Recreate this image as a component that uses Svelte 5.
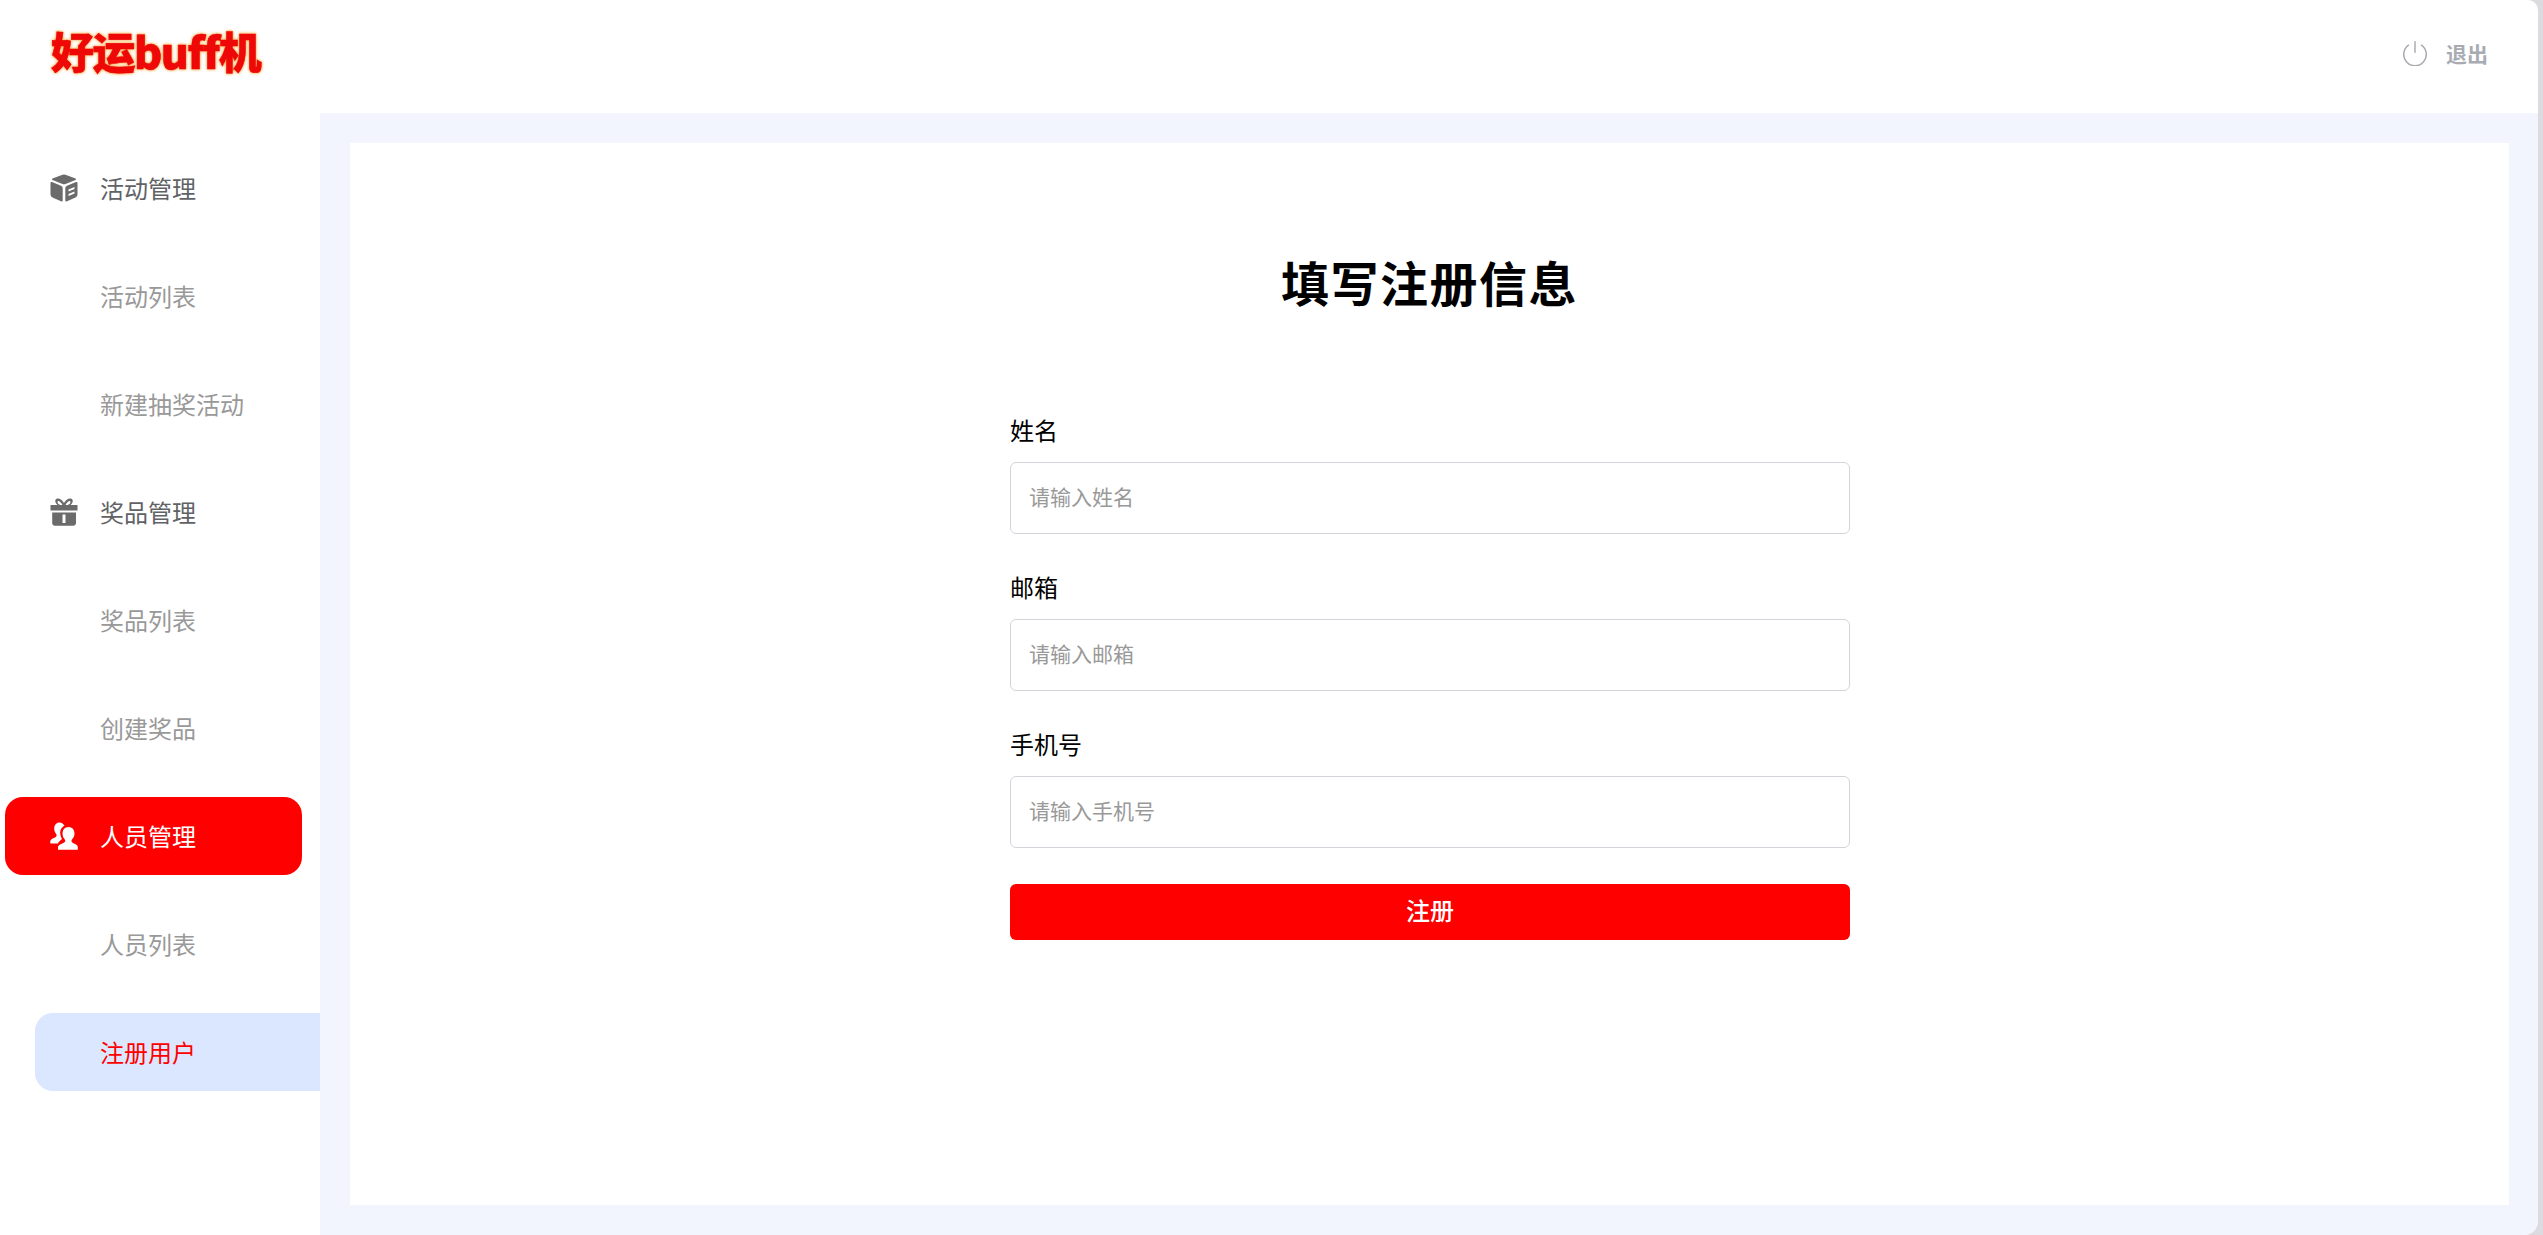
<script>
  const menu = [
    { label: '活动管理', icon: 'cube', kind: 'parent' },
    { label: '活动列表', kind: 'child' },
    { label: '新建抽奖活动', kind: 'child' },
    { label: '奖品管理', icon: 'gift', kind: 'parent' },
    { label: '奖品列表', kind: 'child' },
    { label: '创建奖品', kind: 'child' },
    { label: '人员管理', icon: 'users', kind: 'parent active' },
    { label: '人员列表', kind: 'child' },
    { label: '注册用户', kind: 'child current' }
  ];
  const fields = [
    { label: '姓名', ph: '请输入姓名' },
    { label: '邮箱', ph: '请输入邮箱' },
    { label: '手机号', ph: '请输入手机号' }
  ];
</script>

<div class="page">
  <header class="top">
    <div class="logo">好运buff机</div>
    <div class="logout">
      <svg class="power" viewBox="0 0 24 25" fill="none" stroke="currentColor" stroke-width="1.5" stroke-linecap="round">
        <path d="M5.500 4.200a11.300 11.300 0 1 0 13 0" />
        <path d="M12 0.800v10.400" />
      </svg>
      <span>退出</span>
    </div>
  </header>
  <div class="body">
    <nav class="side">
      {#each menu as m}
        <div class="item {m.kind}">
          {#if m.icon === 'cube'}
            <svg class="ic" viewBox="0 0 28 28" fill="currentColor">
              <path d="M12.500 0.800Q14 0.300 15.500 0.800L25.500 4.500Q27 5.200 25.500 6L15.500 10Q14 10.600 12.500 10L2.500 6Q1 5.200 2.500 4.500Z" />
              <path d="M0.500 9Q0.500 7.500 2 8L11 11.800Q12.700 12.500 12.700 14V26.500Q12.700 28 11 27.300L2.500 23.500Q0.500 22.700 0.500 20.500Z" />
              <path fill-rule="evenodd" d="M27.500 9Q27.500 7.500 26 8L17 11.800Q15.300 12.500 15.300 14V26.500Q15.300 28 17 27.300L25.500 23.500Q27.500 22.700 27.500 20.500ZM18.500 15.500 24.500 13V15L18.500 17.500ZM18.500 20 24.500 17.500V19.500L18.500 22Z" />
            </svg>
          {:else if m.icon === 'gift'}
            <svg class="ic" viewBox="0 0 28 28" fill="currentColor">
              <path fill-rule="evenodd" d="M0.500 7H27.500V12.500H0.500ZM7.500 7C4.500 5 4.500 0.800 7.500 0.500 10 0.300 12.500 2.500 14 5 15.500 2.500 18 0.300 20.500 0.500 23.500 0.800 23.500 5 20.500 7H17.500C19.800 6 20.800 5 20.300 3.400 19.800 2.200 17.200 3.500 15.500 7H12.500C10.800 3.500 8.200 2.200 7.700 3.400 7.200 5 8.200 6 10.500 7Z" />
              <path fill-rule="evenodd" d="M2.200 14.500H26V24.500Q26 27.800 23 27.800H5Q2.200 27.800 2.200 24.500ZM12.500 16.500V25H15.500V16.500Z" />
            </svg>
          {:else if m.icon === 'users'}
            <svg class="ic" viewBox="0 0 28 28" fill="currentColor">
              <path d="M9.500 0.500C6.500 0.500 4.200 3 4.200 6.500 4.200 9 5.200 10.800 6.200 12 7 13.200 6.800 14.400 5 15.500 3 16.500 0.500 17 0.300 19.500V21.500H8C8.600 19.500 11 18 12 17 11 15 10 12.500 10.200 10 10.400 7 12 5 14.500 3.800 13.500 1.800 11.700 0.500 9.500 0.500Z" />
              <path d="M18.500 5C15 5 12.500 7.800 12.500 11.500 12.500 14 13.600 16 14.800 17.500 15.700 19 15.200 20 13.500 21 11.500 22 8.500 22.500 8 25V27.700H27.800V25C27.500 22.500 25 22 23 21 21.500 20 21 19 22 17.500 23.300 16 24.500 14 24.500 11.500 24.500 7.800 22 5 18.500 5Z" />
            </svg>
          {/if}
          <span>{m.label}</span>
        </div>
      {/each}
    </nav>
    <main class="main">
      <section class="card">
        <h1>填写注册信息</h1>
        <form class="form">
          {#each fields as f}
            <label class="field">
              <span>{f.label}</span>
              <input placeholder={f.ph} />
            </label>
          {/each}
          <button type="button">注册</button>
        </form>
      </section>
    </main>
  </div>
</div>

<style>
  :global(html), :global(body) {
    margin: 0;
    background: #dcdce0;
  }
  .page {
    width: 2538px;
    height: 1235px;
    display: flex;
    flex-direction: column;
    background: #fff;
    border-radius: 0 10px 14px 0;
    overflow: hidden;
    font-family: "Noto Sans CJK SC", "Noto Sans", sans-serif;
  }
  .top {
    height: 113px;
    flex: none;
    display: flex;
    align-items: center;
    justify-content: space-between;
    padding: 0 50px 0 51px;
    box-sizing: border-box;
  }
  .logo {
    font-size: 43px;
    line-height: 1;
    font-weight: 900;
    letter-spacing: -1.5px;
    padding-bottom: 12px;
    color: #ee0808;
    -webkit-text-stroke: 0.5px #ee0808;
    filter: drop-shadow(0 0 1px #f7a94a) drop-shadow(0 0 1.5px #f9c98a);
  }
  .logout {
    display: flex;
    align-items: center;
    gap: 19px;
    color: #a9abb3;
    font-size: 21px;
    font-weight: 700;
    padding-bottom: 7px;
  }
  .power {
    width: 24px;
    height: 25px;
    color: #a9abb3;
  }
  .body {
    flex: 1;
    display: flex;
    min-height: 0;
  }
  .side {
    width: 320px;
    flex: none;
    padding-top: 36px;
    display: flex;
    flex-direction: column;
    gap: 30px;
  }
  .item {
    height: 78px;
    display: flex;
    align-items: center;
    font-size: 24px;
    box-sizing: border-box;
  }
  .item span {
    margin-bottom: 2px;
  }
  .parent {
    margin: 0 18px 0 5px;
    padding-left: 45px;
    color: #606266;
    border-radius: 18px;
    gap: 22px;
  }
  .active {
    background: #f00;
    color: #fff;
  }
  .child {
    padding-left: 100px;
    color: #999;
  }
  .current {
    margin-left: 35px;
    padding-left: 65px;
    background: #dbe7fe;
    color: #f00;
    border-radius: 18px 0 0 18px;
  }
  .ic {
    width: 28px;
    height: 28px;
    flex: none;
  }
  .parent .ic {
    color: #6b6b6b;
  }
  .active .ic {
    color: #fff;
  }
  .main {
    flex: 1;
    min-width: 0;
    background: #f2f5fd;
    padding: 30px 29px 30px 30px;
    display: flex;
  }
  .card {
    flex: 1;
    background: #fff;
    display: flex;
    flex-direction: column;
    align-items: center;
  }
  h1 {
    margin: 100px 0 0;
    font-size: 48px;
    line-height: 76px;
    font-weight: 700;
    letter-spacing: 1.5px;
    color: #000;
  }
  .form {
    width: 840px;
    margin: 93px 0 0 1px;
    display: flex;
    flex-direction: column;
    gap: 35px;
  }
  .field {
    display: flex;
    flex-direction: column;
    gap: 15px;
    color: #000;
    font-size: 24px;
    line-height: 35px;
  }
  input {
    height: 72px;
    box-sizing: border-box;
    border: 1.5px solid #d3d5da;
    border-radius: 6px;
    padding: 0 18px 5px;
    font: inherit;
    font-size: 21px;
    outline: none;
    background: #fff;
  }
  input::placeholder {
    color: #999;
    opacity: 1;
  }
  button {
    height: 56px;
    margin-top: 1px;
    padding: 0 0 6px;
    border: 0;
    border-radius: 6px;
    background: #f00;
    color: #fff;
    font: inherit;
    font-size: 24px;
    font-weight: 500;
  }
</style>
